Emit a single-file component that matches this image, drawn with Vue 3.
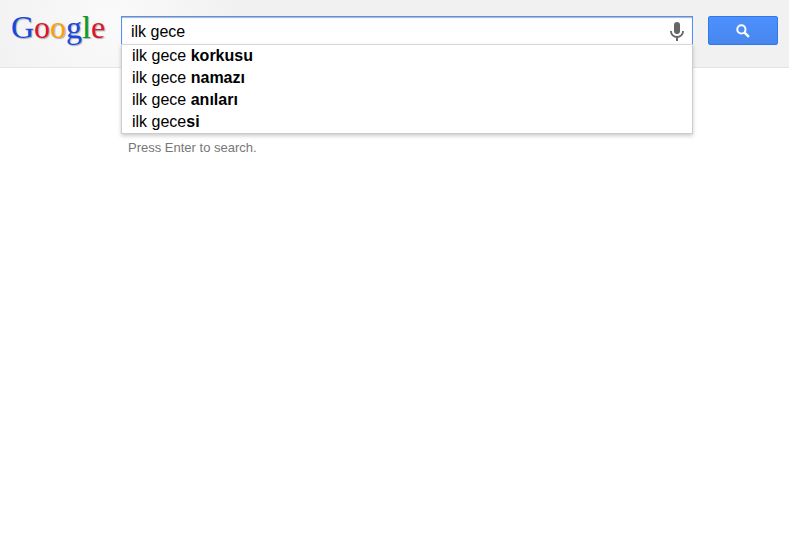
<script setup>
import { ref } from 'vue'

const query = ref('ilk gece')

const wordmark = [
  { letter: 'G', tone: 'blue' },
  { letter: 'o', tone: 'red' },
  { letter: 'o', tone: 'yellow' },
  { letter: 'g', tone: 'blue' },
  { letter: 'l', tone: 'green' },
  { letter: 'e', tone: 'red' },
]

const suggestions = [
  { typed: 'ilk gece ', rest: 'korkusu' },
  { typed: 'ilk gece ', rest: 'namazı' },
  { typed: 'ilk gece ', rest: 'anıları' },
  { typed: 'ilk gece', rest: 'si' },
]

function pick(item) {
  query.value = item.typed + item.rest
}
</script>

<template>
  <div class="page">
    <header class="bar">
      <a class="logo" href="#" aria-label="Google">
        <span v-for="(part, i) in wordmark" :key="i" :class="part.tone">{{ part.letter }}</span>
      </a>
      <form class="search" role="search" @submit.prevent>
        <div class="box">
          <div class="field">
            <input v-model="query" class="query" type="text" aria-label="Search" autocomplete="off" />
            <button class="mic" type="button" aria-label="Search by voice">
              <svg width="14" height="20" viewBox="0 0 14 20" aria-hidden="true">
                <rect x="4" y="0" width="6" height="12" rx="3" fill="#666" />
                <path d="M1 9v.5a6 5.5 0 0 0 12 0V9" fill="none" stroke="#666" stroke-width="1.8" />
                <path d="M7 15v4" stroke="#666" stroke-width="2" />
              </svg>
            </button>
          </div>
          <ul class="suggestions">
            <li v-for="item in suggestions" :key="item.rest">
              <button type="button" class="suggestion" @click="pick(item)">{{ item.typed }}<b>{{ item.rest }}</b></button>
            </li>
          </ul>
        </div>
        <button class="submit" type="submit" aria-label="Google Search">
          <svg width="14" height="14" viewBox="0 0 14 14" aria-hidden="true">
            <circle cx="5.4" cy="5.4" r="4.1" fill="none" stroke="#fff" stroke-width="2" />
            <path d="M8.3 8.3l4.6 4.6" stroke="#fff" stroke-width="2.4" />
          </svg>
        </button>
      </form>
    </header>
    <main class="results">
      <p class="hint">Press Enter to search.</p>
    </main>
  </div>
</template>

<style>
body {
  margin: 0;
  background: #fff;
}
</style>

<style scoped>
.page {
  font-family: "Liberation Sans", Arial, sans-serif;
  color: #000;
}
.bar {
  display: grid;
  grid-template-columns: 110px 1fr;
  box-sizing: border-box;
  height: 68px;
  padding: 16px 11px 0;
  border-bottom: 1px solid #e5e5e5;
  background: radial-gradient(circle 130px at 110px 20px, #fafafa, #f1f1f1);
}
.logo {
  font-family: "Liberation Serif", "Times New Roman", serif;
  font-size: 32px;
  line-height: 22px;
  text-decoration: none;
  white-space: nowrap;
  text-shadow: 1px 1px 1px rgba(0, 0, 0, 0.3);
}
.blue {
  color: #1648e0;
}
.red {
  color: #d8172f;
}
.yellow {
  color: #f8a10c;
}
.green {
  color: #0a9a20;
}
.search {
  display: flex;
  gap: 15px;
}
.box {
  position: relative;
  flex: 1;
}
.field {
  display: flex;
  align-items: center;
  box-sizing: border-box;
  height: 29px;
  padding: 0 8px 0 9px;
  border: 1px solid #4d90fe;
  background: #fff;
  box-shadow: inset 0 1px 1px rgba(0, 0, 0, 0.3);
}
.query {
  flex: 1;
  box-sizing: border-box;
  min-width: 0;
  height: 27px;
  padding: 2px 0 0;
  border: 0;
  outline: 0;
  background: transparent;
  color: #000;
  font: 16px "Liberation Sans", Arial, sans-serif;
}
.mic {
  display: flex;
  padding: 2px 0 0;
  border: 0;
  background: transparent;
}
.suggestions {
  position: absolute;
  top: 28px;
  left: 0;
  right: 0;
  margin: 0;
  padding: 0;
  list-style: none;
  border: 1px solid #ccc;
  border-top-color: #d9d9d9;
  background: #fff;
  box-shadow: 0 2px 4px rgba(0, 0, 0, 0.2);
}
.suggestion {
  display: block;
  width: 100%;
  padding: 0 10px;
  border: 0;
  background: transparent;
  color: #000;
  font: 16px/22px "Liberation Sans", Arial, sans-serif;
  text-align: left;
}
.submit {
  display: flex;
  align-items: center;
  justify-content: center;
  width: 70px;
  height: 29px;
  padding: 0;
  border: 1px solid #3079ed;
  border-radius: 2px;
  background: linear-gradient(#4d90fe, #4787ed);
}
.results {
  padding: 72px 11px 0 128px;
}
.hint {
  margin: 0;
  color: #777;
  font-size: 13px;
  line-height: 16px;
}
</style>
